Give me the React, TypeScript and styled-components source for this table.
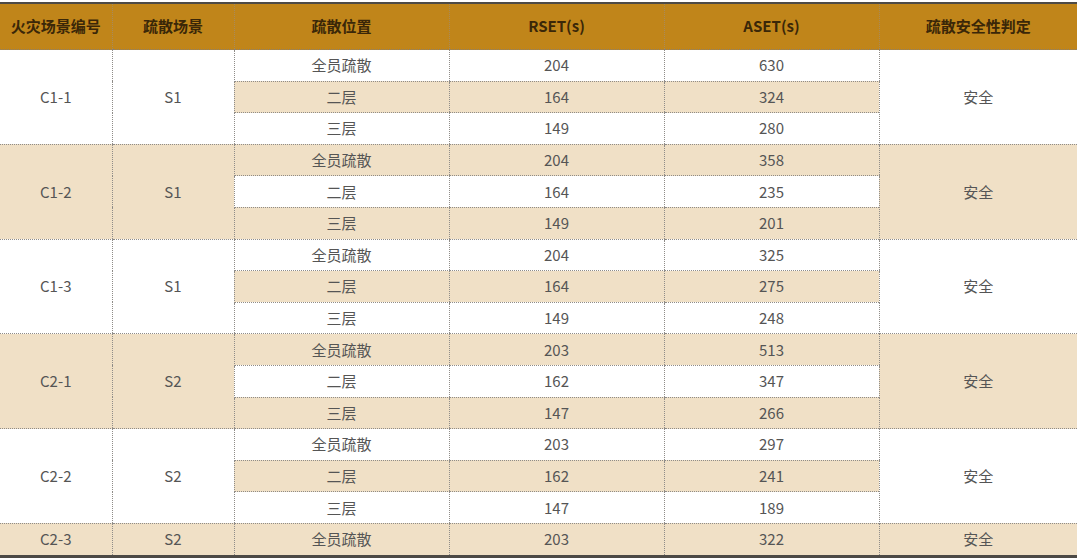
import React from "react";
import styled, { createGlobalStyle } from "styled-components";

const Global = createGlobalStyle`
  html, body { margin: 0; padding: 0; background: #ffffff; }
  body { font-family: "Noto Sans CJK SC", "Noto Sans", sans-serif; }
`;

const Page = styled.div`
  padding-top: 2px;
  width: 1080px;
`;

const Table = styled.table`
  width: 1077px;
  border-collapse: collapse;
  table-layout: fixed;
  border-top: 2px solid #4d4a46;
  border-bottom: 3px solid #4d4a46;
`;

const HeadCell = styled.th`
  background: #c0851a;
  color: #3a2708;
  font-size: 15px;
  font-weight: 700;
  height: 43px;
  padding: 0 0 2px 0;
  text-align: center;
  border-left: 1px dotted #a88a5a;
  border-bottom: 1px dotted #8a8070;
  &:first-child { border-left: none; }
`;

const Cell = styled.td<{ $shade: boolean; $first?: boolean }>`
  background: ${(p) => (p.$shade ? "#f0e0c6" : "#ffffff")};
  color: #555555;
  font-size: 15px;
  height: 30.6px;
  padding: 0;
  text-align: center;
  border: 1px dotted #8f8c88;
  border-left: ${(p) => (p.$first ? "none" : "1px dotted #8f8c88")};
  border-right: none;
  line-height: 20px;
`;

type Group = {
  id: string;
  scene: string;
  rows: [string, string, string][];
};

const groups: Group[] = [
  { id: "C1-1", scene: "S1", rows: [["全员疏散", "204", "630"], ["二层", "164", "324"], ["三层", "149", "280"]] },
  { id: "C1-2", scene: "S1", rows: [["全员疏散", "204", "358"], ["二层", "164", "235"], ["三层", "149", "201"]] },
  { id: "C1-3", scene: "S1", rows: [["全员疏散", "204", "325"], ["二层", "164", "275"], ["三层", "149", "248"]] },
  { id: "C2-1", scene: "S2", rows: [["全员疏散", "203", "513"], ["二层", "162", "347"], ["三层", "147", "266"]] },
  { id: "C2-2", scene: "S2", rows: [["全员疏散", "203", "297"], ["二层", "162", "241"], ["三层", "147", "189"]] },
  { id: "C2-3", scene: "S2", rows: [["全员疏散", "203", "322"]] },
];

const widths = [112, 122, 215, 215, 215, 198];
const heads = ["火灾场景编号", "疏散场景", "疏散位置", "RSET(s)", "ASET(s)", "疏散安全性判定"];

export default function App() {
  let idx = 0;
  return (
    <Page>
      <Global />
      <Table>
        <colgroup>
          {widths.map((w, i) => (
            <col key={i} style={{ width: w }} />
          ))}
        </colgroup>
        <thead>
          <tr>
            {heads.map((h) => (
              <HeadCell key={h}>{h}</HeadCell>
            ))}
          </tr>
        </thead>
        <tbody>
          {groups.map((g, gi) =>
            g.rows.map((r, ri) => {
              const shadeRow = idx % 2 === 1;
              idx++;
              const groupShade = gi % 2 === 1;
              const span = g.rows.length;
              return (
                <tr key={g.id + ri}>
                  {ri === 0 && (
                    <>
                      <Cell $shade={groupShade} $first rowSpan={span}>{g.id}</Cell>
                      <Cell $shade={groupShade} rowSpan={span}>{g.scene}</Cell>
                    </>
                  )}
                  <Cell $shade={shadeRow}>{r[0]}</Cell>
                  <Cell $shade={shadeRow}>{r[1]}</Cell>
                  <Cell $shade={shadeRow}>{r[2]}</Cell>
                  {ri === 0 && (
                    <Cell $shade={groupShade} rowSpan={span}>安全</Cell>
                  )}
                </tr>
              );
            })
          )}
        </tbody>
      </Table>
    </Page>
  );
}
